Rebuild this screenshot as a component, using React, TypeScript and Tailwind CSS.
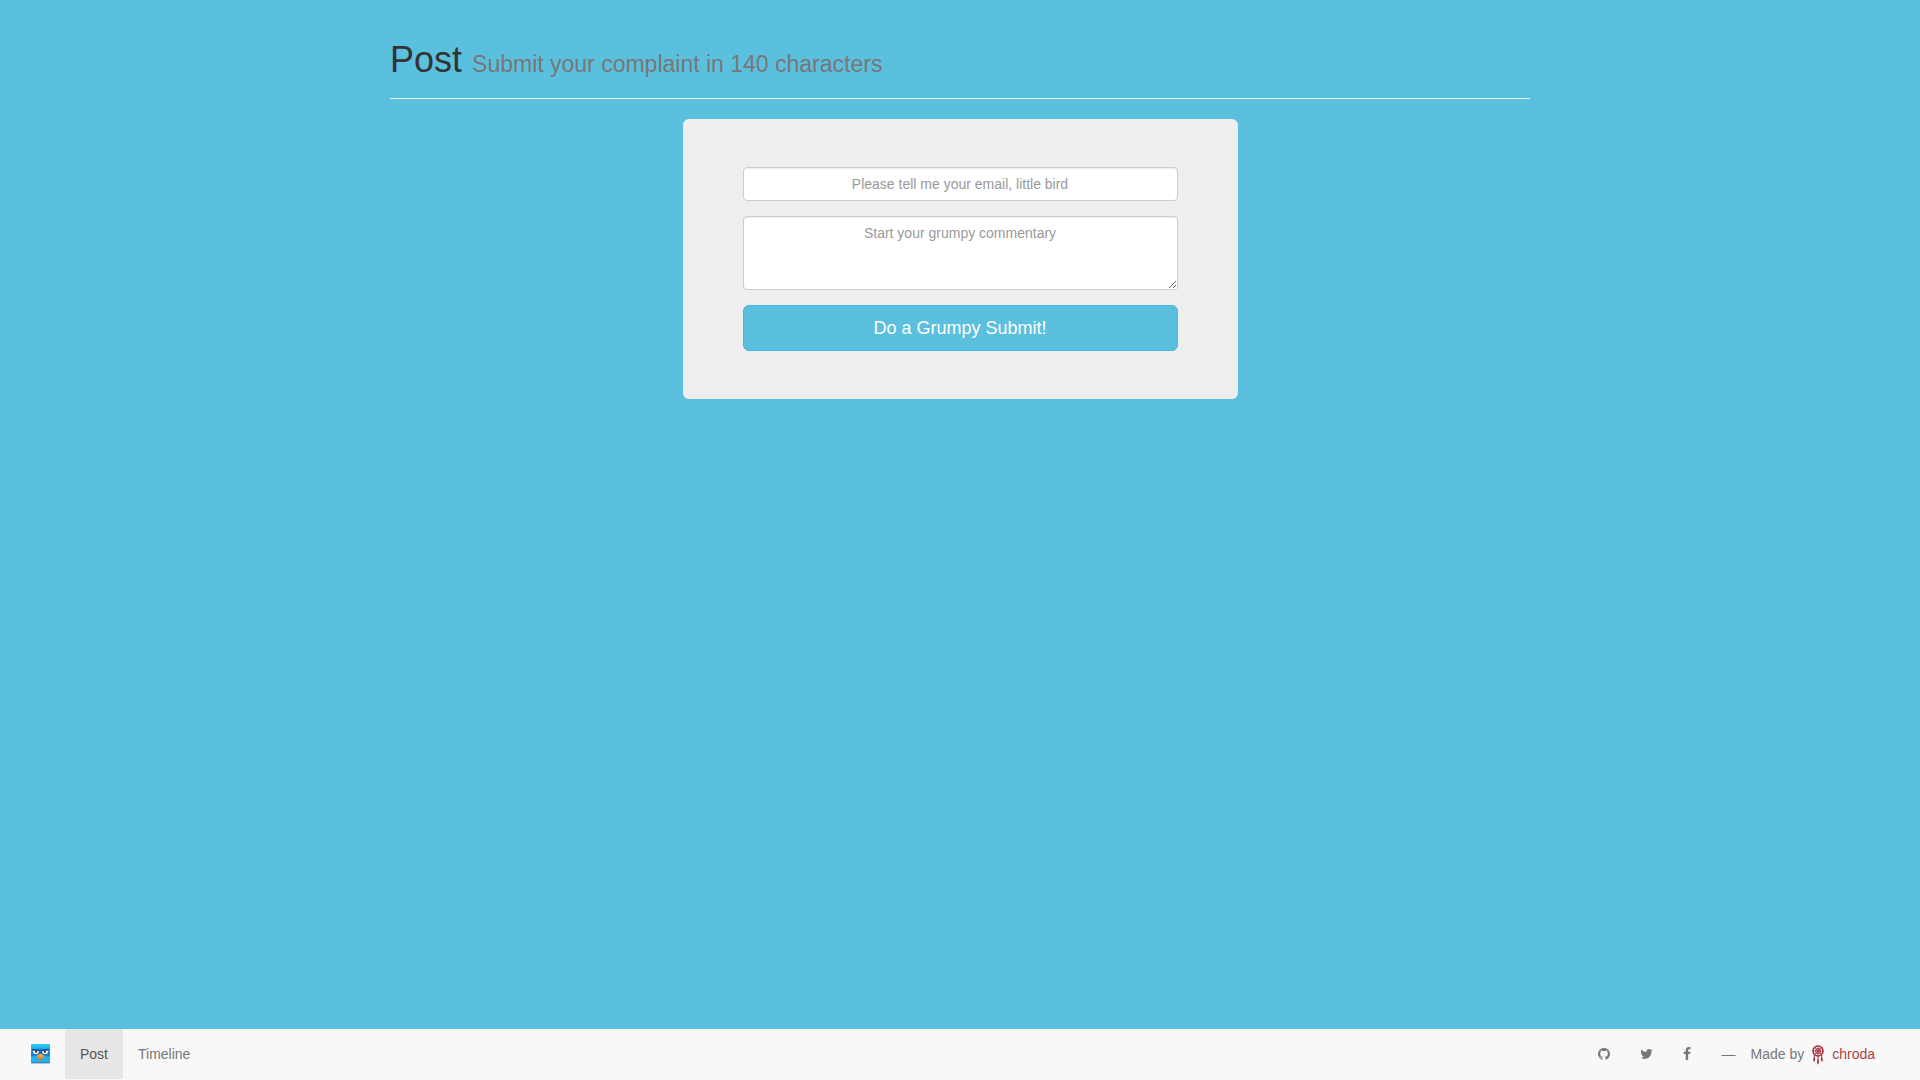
import React from "react";

function OwlLogo() {
  return (
    <svg viewBox="0 0 20 20" className="size-5" aria-hidden="true">
      <defs>
        <linearGradient id="sky" x1="0" y1="0" x2="0" y2="1">
          <stop offset="0" stopColor="#35cdf8" />
          <stop offset="0.3" stopColor="#1ea2ea" />
          <stop offset="0.6" stopColor="#1583d8" />
          <stop offset="1" stopColor="#1d93dc" />
        </linearGradient>
        <linearGradient id="beak" x1="0" y1="0" x2="0" y2="1">
          <stop offset="0" stopColor="#fbb548" />
          <stop offset="1" stopColor="#d86a16" />
        </linearGradient>
      </defs>
      <rect x="1" y="1" width="19" height="19" rx="1" fill="#b9c3cb" />
      <rect x="1" y="0" width="19" height="19" rx="1" fill="url(#sky)" />
      <path d="M1 13q1.500-2 3 0 1.500-2 3 0 1.500 2 3 3 1.500-1 3-3 1.500-2 3 0 1.500-2 4 0v5H1z" fill="#28b0ee" />
      <path d="M2 5h17v4q-3 3-6 2L10.500 9 8 11q-3 1-6-2z" fill="#126bbd" />
      <path d="M2.500 6h6.500q.2 4.300-3.200 4.300-3 0-3.300-4.300zM18.500 6H12q-.2 4.300 3.200 4.300 3 0 3.300-4.300z" fill="#f6f2df" />
      <path d="M2 5l7.500 1.300v1L2 6.400zM19 5l-7.500 1.300v1L19 6.400z" fill="#0a4b8c" />
      <rect x="5" y="7" width="2" height="1.600" fill="#26323c" />
      <rect x="14" y="7" width="2" height="1.600" fill="#26323c" />
      <path d="M10.500 9.800q3 .8 4.300 2.700-2.300 1-4.300 4.800-2-3.800-4.300-4.800 1.300-1.900 4.300-2.700z" fill="url(#beak)" />
    </svg>
  );
}

function DreamcatcherLogo() {
  return (
    <svg viewBox="0 0 14 21" className="h-[21px] w-[14px]" fill="none" stroke="#a3303a" aria-hidden="true">
      <circle cx="7" cy="7" r="5" strokeWidth="1.600" />
      <circle cx="7" cy="7" r="2.300" strokeWidth="1.200" />
      <path d="M7 2v10M2 7h10M3.500 3.500l7 7M10.500 3.500l-7 7" strokeWidth="0.700" />
      <circle cx="7" cy="7" r="0.900" fill="#a3303a" stroke="none" />
      <path d="M3.300 11v3M7 12v4M10.700 11v3" strokeWidth="0.900" />
      <path d="M3.500 12.500q1.500 3-.5 5.500-1.900-2.500.5-5.500zM10.500 12.500q-1.500 3 .5 5.500 1.900-2.500-.5-5.500zM7 14.500q2 3 0 6.300-2-3.300 0-6.300z" fill="#a3303a" stroke="none" />
    </svg>
  );
}

const socials = [
  {
    label: "GitHub",
    size: "h-[14px] w-3",
    viewBox: "128 0 1536 1792",
    d: "M896 128q209 0 385.500 103t279.500 279.500 103 385.500q0 251-146.500 451.500t-378.500 277.500q-27 5-40-7t-13-30q0-3 .5-76.500t.5-134.500q0-97-52-142 57-6 102.500-18t94-39 81-66.500 53-105 20.500-150.500q0-119-79-206 37-91-8-204-28-9-81 11t-92 44l-38 24q-93-26-192-26t-192 26q-16-11-42.500-27t-83.500-38.500-85-13.500q-45 113-8 204-79 87-79 206 0 85 20.500 150t52.500 105 80.500 67 94 39 102.500 18q-39 36-49 103-21 10-45 15t-57 5-65.500-21.500-55.500-62.500q-19-32-48.500-52t-49.500-24l-20-3q-21 0-29 4.500t-5 11.500 9 14 13 12l7 5q22 10 43.500 38t31.500 51l10 23q13 38 44 61.500t67 30 69.500 7 55.500-3.500l23-4q0 38 .5 88.500t.5 54.500q0 18-13 30t-40 7q-232-77-378.500-277.500t-146.500-451.500q0-209 103-385.500t279.500-279.500 385.500-103z",
  },
  {
    label: "Twitter",
    size: "h-[14px] w-[13px]",
    viewBox: "64 0 1664 1792",
    d: "M1684 408q-67 98-162 167 1 14 1 42 0 130-38 259.500t-115.500 248.500-184.500 210.500-258 146-323 54.500q-271 0-496-145 35 4 78 4 225 0 401-138-105-2-188-64.500t-114-159.500q33 5 61 5 43 0 85-11-112-23-185.500-111.500t-73.500-205.500v-4q68 38 146 41-66-44-105-115t-39-154q0-88 44-163 121 149 294.500 238.500t371.500 99.500q-8-38-8-74 0-134 94.500-228.500t228.500-94.500q140 0 236 102 109-21 205-78-37 115-142 178 93-10 186-50z",
  },
  {
    label: "Facebook",
    size: "h-[14px] w-2",
    viewBox: "384 0 1024 1792",
    d: "M1343 12v264h-157q-86 0-116 36t-30 108v189h293l-39 296h-254v759h-306v-759h-255v-296h255v-218q0-186 104-288.500t277-102.500q147 0 228 12z",
  },
];

const control =
  "block w-full rounded-[4px] border border-[#ccc] bg-white px-3 py-1.5 text-center text-sm leading-5 text-[#555] shadow-[inset_0_1px_1px_rgba(0,0,0,0.075)] placeholder:text-[#999] focus:border-[#66afe9] focus:outline-none";

export default function App() {
  return (
    <div className="flex min-h-screen flex-col bg-[#5bc0de] font-['Liberation_Sans',Arial,sans-serif] text-sm leading-5 text-[#333]">
      <main className="mx-auto w-full max-w-[1170px] grow px-[15px] pt-10">
        <header className="mb-5 border-b border-[#eee] pb-[18px]">
          <h1 className="text-4xl leading-10">
            Post <small className="text-[23px] leading-6 text-[#777]">Submit your complaint in 140 characters</small>
          </h1>
        </header>
        <form className="mx-auto flex max-w-[555px] flex-col gap-[15px] rounded-md bg-[#eee] px-[60px] py-12" onSubmit={(e) => e.preventDefault()}>
          <input type="email" aria-label="Email" placeholder="Please tell me your email, little bird" className={control} />
          <textarea rows={3} aria-label="Commentary" placeholder="Start your grumpy commentary" className={`${control} resize-y`} />
          <button type="submit" className="w-full rounded-md border border-[#46b8da] bg-[#5bc0de] px-4 py-2.5 text-lg leading-6 text-white">
            Do a Grumpy Submit!
          </button>
        </form>
      </main>
      <nav className="flex justify-between border-b border-[#f8f8f8] bg-[#f8f8f8] px-[30px] text-[#777]">
        <div className="flex">
          <a href="#home" aria-label="Home" className="py-[15px] pr-[15px]">
            <OwlLogo />
          </a>
          <a href="#post" aria-current="page" className="bg-[#e7e7e7] p-[15px] text-[#555]">
            Post
          </a>
          <a href="#timeline" className="p-[15px]">
            Timeline
          </a>
        </div>
        <div className="flex">
          {socials.map((s) => (
            <a key={s.label} href={`#${s.label}`} aria-label={s.label} className="flex items-center p-[15px]">
              <svg viewBox={s.viewBox} className={s.size} fill="currentColor" aria-hidden="true">
                <path d={s.d} />
              </svg>
            </a>
          ))}
          <span className="py-[15px] pl-[15px]">—</span>
          <div className="flex h-[50px] p-[15px]">
            <span>Made by</span>
            <a href="#chroda" className="flex gap-[7px] pl-[7px] text-[#a94442]">
              <DreamcatcherLogo />
              chroda
            </a>
          </div>
        </div>
      </nav>
    </div>
  );
}
